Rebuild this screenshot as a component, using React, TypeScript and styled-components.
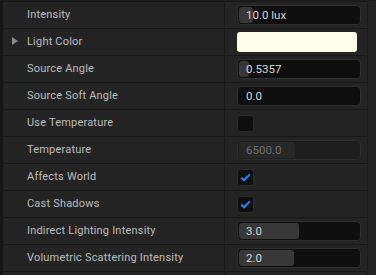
import styled, { createGlobalStyle } from "styled-components";

const GlobalStyle = createGlobalStyle`
  html, body {
    margin: 0;
    padding: 0;
    background: #1a1a1a;
    overflow: hidden;
  }
  body {
    font-family: Roboto, "Noto Sans", "Liberation Sans", sans-serif;
  }
`;

type Row =
  | { label: string; kind: "number"; value: string; fill: number; disabled?: boolean }
  | { label: string; kind: "color"; color: string }
  | { label: string; kind: "check"; checked: boolean };

const rows: Row[] = [
  { label: "Intensity", kind: "number", value: "10.0 lux", fill: 14 },
  { label: "Light Color", kind: "color", color: "#fffeeb" },
  { label: "Source Angle", kind: "number", value: "0.5357", fill: 10 },
  { label: "Source Soft Angle", kind: "number", value: "0.0", fill: 0 },
  { label: "Use Temperature", kind: "check", checked: false },
  { label: "Temperature", kind: "number", value: "6500.0", fill: 56, disabled: true },
  { label: "Affects World", kind: "check", checked: true },
  { label: "Cast Shadows", kind: "check", checked: true },
  { label: "Indirect Lighting Intensity", kind: "number", value: "3.0", fill: 60 },
  { label: "Volumetric Scattering Intensity", kind: "number", value: "2.0", fill: 55 },
  { label: "", kind: "number", value: "", fill: 0 },
];

const App: React.FC = () => {
  return (
    <>
      <GlobalStyle />
      <Panel>
        <Gutter />
        <List>
          {rows.map((row, i) => (
            <PropRow key={i}>
              <NameCell>
                {row.kind === "color" && <Expander />}
                <Label>{row.label}</Label>
              </NameCell>
              <ValueCell>
                {row.kind === "number" && row.label && (
                  <NumberBox $disabled={row.disabled}>
                    {row.fill > 0 && <Fill $disabled={row.disabled} style={{ width: row.fill }} />}
                    <NumberText $disabled={row.disabled}>{row.value}</NumberText>
                  </NumberBox>
                )}
                {row.kind === "color" && <Swatch style={{ background: row.color }} />}
                {row.kind === "check" && (
                  <CheckBox>
                    {row.checked && (
                      <svg width="11" height="9" viewBox="0 0 11 9">
                        <path d="M1.2 4.6 L4 7.3 L9.8 1.4" fill="none" stroke="#1a8cff" strokeWidth="2" />
                      </svg>
                    )}
                  </CheckBox>
                )}
              </ValueCell>
            </PropRow>
          ))}
        </List>
        <ScrollTrack />
      </Panel>
    </>
  );
};

export default App;

const Panel = styled.div`
  display: flex;
  width: 376px;
  height: 275px;
  overflow: hidden;
  background: #242424;
  border-top: 1px solid #1c1c1c;
  box-sizing: border-box;
`;

const Gutter = styled.div`
  width: 3px;
  flex: none;
  background: #161616;
`;

const List = styled.div`
  flex: 1;
  display: flex;
  flex-direction: column;
`;

const PropRow = styled.div`
  display: grid;
  grid-template-columns: 221px 1px 1fr;
  height: 26px;
  flex: none;
  border-top: 1px solid #181818;
  &::before {
    content: "";
    grid-column: 2;
    grid-row: 1;
    background: #191919;
  }
`;

const NameCell = styled.div`
  grid-column: 1;
  grid-row: 1;
  display: flex;
  align-items: center;
  position: relative;
  padding-left: 24px;
  padding-bottom: 1px;
`;

const Expander = styled.span`
  position: absolute;
  left: 9px;
  top: 8px;
  width: 0;
  height: 0;
  border-top: 4.5px solid transparent;
  border-bottom: 4.5px solid transparent;
  border-left: 6px solid #8c8c8c;
`;

const Label = styled.span`
  font-size: 11px;
  color: #bdbdbd;
  white-space: nowrap;
  letter-spacing: 0.2px;
`;

const ValueCell = styled.div`
  grid-column: 3;
  grid-row: 1;
  display: flex;
  align-items: center;
  padding-left: 12px;
`;

const NumberBox = styled.div<{ $disabled?: boolean }>`
  position: relative;
  width: 124px;
  height: 20px;
  box-sizing: border-box;
  border: 1px solid ${(p) => (p.$disabled ? "#2e2e2e" : "#303030")};
  border-radius: 4px;
  background: ${(p) => (p.$disabled ? "#1e1e1e" : "#0f0f0f")};
  display: flex;
  align-items: center;
  overflow: hidden;
`;

const Fill = styled.div<{ $disabled?: boolean }>`
  position: absolute;
  left: 1px;
  top: 1px;
  bottom: 1px;
  border-radius: 3px;
  background: ${(p) => (p.$disabled ? "#282828" : "#383838")};
`;

const NumberText = styled.span<{ $disabled?: boolean }>`
  position: relative;
  padding-left: 8px;
  font-size: 11.5px;
  color: ${(p) => (p.$disabled ? "#707070" : "#d6d6d6")};
`;

const Swatch = styled.div`
  width: 120px;
  height: 20px;
  border-radius: 3px;
`;

const CheckBox = styled.div`
  width: 17px;
  height: 17px;
  box-sizing: border-box;
  border: 1px solid #2b2b2b;
  border-radius: 3px;
  background: #0f0f0f;
  display: flex;
  align-items: center;
  justify-content: center;
`;

const ScrollTrack = styled.div`
  width: 8px;
  flex: none;
  background: #242424;
  border-left: 1px solid #1c1c1c;
`;
